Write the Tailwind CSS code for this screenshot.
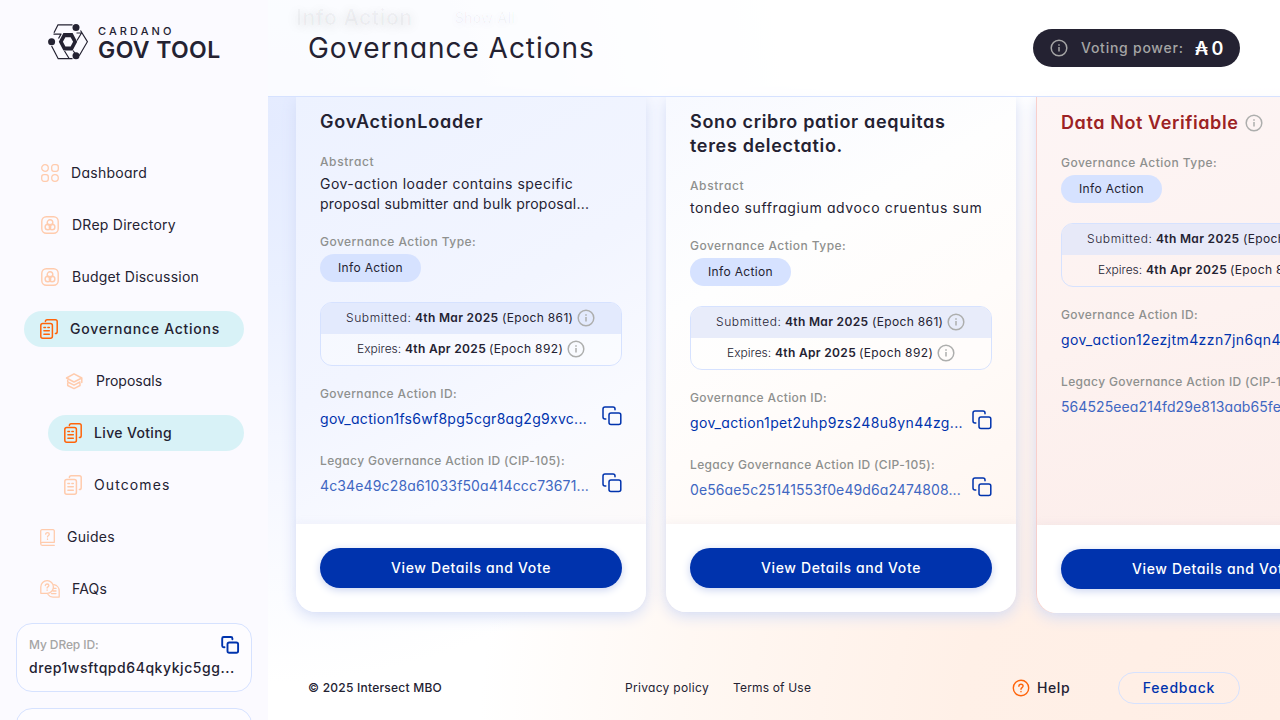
<!DOCTYPE html>
<html lang="en">
<head>
<meta charset="utf-8">
<title>Governance Actions</title>
<script src="https://cdn.jsdelivr.net/npm/@tailwindcss/browser@4"></script>
</head>
<body class="bg-white font-['Inter',sans-serif] text-[#242232] [font-feature-settings:'cv11']">
<svg class="hidden">
  <symbol id="info" viewBox="0 0 18 18"><g fill="none" stroke="currentColor" stroke-width="1.5"><circle cx="9" cy="9" r="7.8"/><path d="M9 8v4.6M9 5.2v1.5"/></g></symbol>
  <symbol id="copy" viewBox="0 0 20 20"><g fill="none" stroke="currentColor" stroke-width="1.5" stroke-linejoin="round" stroke-linecap="round"><rect x="7" y="7" width="11.8" height="11.6" rx="2"/><path d="M3.8 13H3a2 2 0 0 1-2-2V3a2 2 0 0 1 2-2h8a2 2 0 0 1 2 2v.8"/></g></symbol>
  <symbol id="doc" viewBox="0 0 18 20"><g fill="none" stroke="currentColor" stroke-width="1.5" stroke-linecap="round" stroke-linejoin="round"><rect x=".8" y="4.6" width="11.6" height="14.6" rx="2"/><path d="M5.4 2.6c0-1 .7-1.8 1.7-1.8h8.3c1 0 1.8.8 1.8 1.8v10.2c0 1-.8 1.8-1.8 1.800M3.9 8.400h1.600M7.900 8.400h1.400M3.900 11.800h5.400M3.900 15.200h5.400"/></g></symbol>
  <symbol id="rings" viewBox="0 0 18 18"><g fill="none" stroke="currentColor" stroke-width="1.4"><rect x=".8" y=".8" width="16.4" height="16.4" rx="4.5"/><circle cx="9" cy="6.6" r="2.8"/><circle cx="6.9" cy="11" r="2.8"/><circle cx="11.1" cy="11" r="2.8"/></g></symbol>
</svg>
<div class="flex h-[720px] w-[1280px] overflow-hidden">

  <!-- Sidebar -->
  <aside class="flex w-[268px] shrink-0 flex-col bg-[#fbfaff]">
    <div class="flex h-[155px] shrink-0 items-start gap-[10px] pt-[23px] pl-12">
      <svg class="mt-px h-[36px] w-[40px]" viewBox="0 0 40 36" fill="none" stroke="#242232" stroke-width="1.2">
        <path d="M6 8.800 10 .8h14.500M32.500 6.500l6.900 11.200-8.200 14M24.500 34.700H10.200L3.600 22M5.500 10.100h8M13 10.100 10.500 14.500M33.500 9l-4.500 7.500M28.500 9h5M16.500 27l4.800 7.700M25 26.500l2.500 3.500"/>
        <path fill="#242232" stroke="none" fill-rule="evenodd" d="M15.400 9h9.200l4.600 8.800-4.600 8.800h-9.200l-4.600-8.800ZM17.400 13.200l-2.500 4.600 2.500 4.600h5.200l2.500-4.600-2.500-4.600Z"/>
        <g fill="#242232" stroke="none"><circle cx="28" cy="3.6" r="3.5"/><circle cx="3.6" cy="17.800" r="3.5"/><circle cx="28" cy="31.800" r="3.5"/></g>
      </svg>
      <div class="flex flex-col whitespace-nowrap">
        <span class="mt-[2px] text-[11px] leading-[13px] font-medium tracking-[3.1px]">CARDANO</span>
        <span class="text-[23px] leading-6 font-semibold tracking-[.4px]">GOV TOOL</span>
      </div>
    </div>
    <nav class="flex shrink-0 flex-col gap-4 px-6 text-sm whitespace-nowrap">
      <a class="flex h-9 items-center gap-3 pl-[17px] tracking-[.28px]">
        <svg class="h-[18px] w-[18px] text-[#ffcbad]" viewBox="0 0 18 18" fill="none" stroke="currentColor" stroke-width="1.3"><circle cx="4" cy="4" r="3.3"/><rect x="10.7" y=".7" width="6.6" height="6.6" rx="2.2"/><rect x=".7" y="10.7" width="6.6" height="6.6" rx="2.2"/><circle cx="14" cy="14" r="3.3"/></svg>Dashboard</a>
      <a class="flex h-9 items-center gap-[13px] pl-[17px] tracking-[.25px]"><svg class="h-[18px] w-[18px] text-[#ffcbad]"><use href="#rings"/></svg>DRep Directory</a>
      <a class="flex h-9 items-center gap-[13px] pl-[17px] tracking-[.22px]"><svg class="h-[18px] w-[18px] text-[#ffcbad]"><use href="#rings"/></svg>Budget Discussion</a>
      <a class="flex h-9 items-center gap-3 rounded-full bg-[#d8f2f7] pl-4 font-medium tracking-[.76px]"><svg class="h-5 w-[18px] text-[#ff640a]"><use href="#doc"/></svg>Governance Actions</a>
      <a class="flex h-9 items-center gap-3 pl-[41px]">
        <svg class="h-[18px] w-[19px] text-[#ffcbad]" viewBox="0 0 19 18" fill="none" stroke="currentColor" stroke-width="1.5" stroke-linejoin="round" stroke-linecap="round"><path d="M1.5 6 9 1.8 16.800 6 9 10ZM16.800 6v4.500M2.700 8.200v1.800L9 13.200l6-3.200M2.700 11.500v2L9 16.600l6-3.100v-2"/></svg>Proposals</a>
      <a class="ml-6 flex h-9 items-center gap-3 rounded-full bg-[#d8f2f7] pl-4 font-medium tracking-[.35px]"><svg class="h-5 w-[18px] text-[#ff640a]"><use href="#doc"/></svg>Live Voting</a>
      <a class="flex h-9 items-center gap-3 pl-10 tracking-[1.1px]"><svg class="h-5 w-[18px] text-[#ffcbad]"><use href="#doc"/></svg>Outcomes</a>
      <a class="flex h-9 items-center gap-3 pl-4 tracking-[.29px]">
        <svg class="h-[17px] w-[15px] text-[#ffcbad]" viewBox="0 0 15 17" fill="none" stroke="currentColor" stroke-width="1.3" stroke-linecap="round"><path d="M14.300 13.300V2c0-.7-.5-1.300-1.300-1.300H2C1.200.7.700 1.300.700 2v12.800M14.300 13.300H2.200a1.500 1.500 0 0 0 0 3h12.100M5.700 5.200c0-1 .8-1.600 1.800-1.600s1.800.7 1.800 1.600c0 1.300-1.800 1.300-1.800 2.700M7.500 9.900v.5"/></svg>Guides</a>
      <a class="flex h-9 items-center gap-3 pl-4 tracking-[.18px]">
        <svg class="h-[18px] w-5 text-[#ffcbad]" viewBox="0 0 20 18" fill="none" stroke="currentColor" stroke-width="1.3" stroke-linecap="round" stroke-linejoin="round"><path d="M.8 13.300h6.300a6.300 6.300 0 1 0-6.300-6.300ZM.8 13.300V7M5.300 5.600c0-1 .8-1.600 1.800-1.600s1.800.7 1.800 1.600c0 1.300-1.800 1.300-1.800 2.500M7.100 9.900v.4M14 4.700a6.200 6.200 0 0 1 5.200 6.200v6.200H13a6 6 0 0 1-5-2.600M14 8.400h2M13.200 11h2.800M11.500 13.600H16"/></svg>FAQs</a>
    </nav>
    <div class="mx-4 mt-4 flex h-[69px] shrink-0 flex-col rounded-2xl border border-[#d6e2ff] bg-[#fdfcff] px-3 pt-[11px] whitespace-nowrap">
      <div class="flex h-5 items-center justify-between text-xs font-medium tracking-[-.1px] text-[#a5a5a5]"><span>My DRep ID:</span>
        <svg class="-mr-px h-5 w-5 text-[#0033ad]" viewBox="0 0 20 20" fill="none" stroke="currentColor" stroke-width="1.9" stroke-linejoin="round" stroke-linecap="round"><rect x="7.500" y="7.500" width="10.600" height="10.200" rx="1.800"/><path d="M4.500 12.200h-.8a1.500 1.500 0 0 1-1.500-1.500V3.500A1.500 1.500 0 0 1 3.700 2h7.200a1.500 1.500 0 0 1 1.500 1.500v.8"/></svg></div>
      <span class="mt-[3px] text-sm leading-5 font-medium tracking-[.56px]">drep1wsftqpd64qkykjc5gg...</span>
    </div>
    <div class="mx-4 mt-4 h-[69px] shrink-0 rounded-2xl border border-[#d6e2ff] bg-[#fdfcff]"></div>
  </aside>

  <!-- Main column -->
  <main class="flex w-[1012px] shrink-0 flex-col overflow-hidden bg-[radial-gradient(ellipse_560px_560px_at_0%_17%,#e4ebff_0%,#eaf0ff_30%,#f6f8ff_65%,#ffffff00_100%),radial-gradient(ellipse_800px_660px_at_100%_100%,#ffeee5_0%,#fff0e7_40%,#fff8f3_75%,#ffffff00_100%)]">
    <header class="relative z-10 flex h-[97px] shrink-0 items-center justify-between border-b border-[#d6e2ff] bg-white/80 pr-10 pl-10">
      <div class="absolute top-[6px] left-[28px] flex h-6 items-center gap-[42px] whitespace-nowrap text-black/3">
        <span class="text-[21px] font-semibold tracking-[.6px] [text-shadow:0_2px_12px_#0000001f]">Info Action</span>
        <span class="text-sm font-medium tracking-[.3px] [text-shadow:0_2px_9px_#0033ad0f]">Show All</span>
      </div>
      <h1 class="relative text-[28px] leading-8 tracking-[.96px] whitespace-nowrap">Governance Actions</h1>
      <div class="flex h-[38px] w-[207px] items-center rounded-full bg-[#242232] pl-[17px] whitespace-nowrap">
        <svg class="h-[18px] w-[18px] text-[#a5a5a5]"><use href="#info"/></svg>
        <span class="ml-[13px] w-[114px] text-sm font-medium tracking-[.75px] text-[#a5a5a5]">Voting power:</span>
        <span class="text-[18px] font-semibold tracking-[-.6px] text-white">₳ 0</span>
      </div>
    </header>

    <div class="flex w-[1200px] shrink-0 items-start gap-5 pl-7">
      <!-- Card 1 -->
      <article class="flex w-[350px] shrink-0 flex-col rounded-b-[20px] shadow-[0_4px_15px_#d3dcf6]">
        <div class="h-[427px] bg-[linear-gradient(150deg,#edf2ff_0%,#f2f5ff_50%,#f9faff_78%,#fdfafa_100%)] px-6 pt-[13px] whitespace-nowrap">
          <h2 class="text-[18px] leading-6 font-semibold tracking-[.82px]">GovActionLoader</h2>
          <p class="mt-5 text-xs font-medium tracking-[.6px] text-[#8e908e]">Abstract</p>
          <p class="mt-1 text-sm leading-5"><span class="tracking-[.48px]">Gov-action loader contains specific</span><br><span class="tracking-[.24px]">proposal submitter and bulk proposal...</span></p>
          <p class="mt-5 text-xs font-medium tracking-[.45px] text-[#8e908e]">Governance Action Type:</p>
          <div class="mt-1 flex h-7 w-[101px] items-center justify-center rounded-full bg-[#d6e2ff] text-xs tracking-[.34px]">Info Action</div>
          <div class="mt-5 flex h-16 flex-col overflow-hidden rounded-xl border border-[#d6e2ff] text-xs">
            <div class="flex h-[31px] items-center bg-[#e3eafd] pb-px pl-[25px]"><span class="w-[69px] font-light tracking-[.6px]">Submitted:</span><span class="w-[87px] font-semibold tracking-[.33px]">4th Mar 2025</span><span class="w-[75px] tracking-[.34px]">(Epoch 861)</span><svg class="h-[18px] w-[18px] text-[#adaead]"><use href="#info"/></svg></div>
            <div class="flex h-[31px] items-center bg-white/40 pb-px pl-[36px]"><span class="w-[48px] font-light">Expires:</span><span class="w-[84px] font-semibold tracking-[.33px]">4th Apr 2025</span><span class="w-[78px] tracking-[.38px]">(Epoch 892)</span><svg class="h-[18px] w-[18px] text-[#adaead]"><use href="#info"/></svg></div>
          </div>
          <p class="mt-5 text-xs font-medium tracking-[.37px] text-[#8e908e]">Governance Action ID:</p>
          <div class="mt-1 flex items-start justify-between text-[#0033ad]"><span class="mt-[3px] text-sm leading-5 tracking-[.29px]">gov_action1fs6wf8pg5cgr8ag2g9xvc...</span><svg class="h-5 w-5"><use href="#copy"/></svg></div>
          <p class="mt-6 text-xs font-medium tracking-[.35px] text-[#8e908e]">Legacy Governance Action ID (CIP-105):</p>
          <div class="mt-1 flex items-start justify-between text-[#0033ad]"><span class="mt-[3px] text-sm leading-5 tracking-[.14px] text-[#4067c2]">4c34e49c28a61033f50a414ccc73671...</span><svg class="h-5 w-5"><use href="#copy"/></svg></div>
        </div>
        <div class="rounded-b-[20px] bg-white p-6 shadow-[0_-3px_6px_#d6dcf030]"><button class="block h-10 w-full rounded-full bg-[#0033ad] text-sm font-medium tracking-[.64px] text-white shadow-[0_2px_8px_#c9d3f0]">View Details and Vote</button></div>
      </article>

      <!-- Card 2 -->
      <article class="flex w-[350px] shrink-0 flex-col rounded-b-[20px] shadow-[0_4px_15px_#d3dcf6]">
        <div class="h-[427px] bg-[linear-gradient(150deg,#f7f9ff_0%,#fefefe_35%,#fffcfa_60%,#fff6f1_100%)] px-6 pt-[13px] whitespace-nowrap">
          <h2 class="text-[18px] leading-6 font-semibold tracking-[.67px]">Sono cribro patior aequitas<br>teres delectatio.</h2>
          <p class="mt-5 text-xs font-medium tracking-[.6px] text-[#8e908e]">Abstract</p>
          <p class="mt-1 text-sm leading-5 tracking-[.62px]">tondeo suffragium advoco cruentus sum</p>
          <p class="mt-5 text-xs font-medium tracking-[.45px] text-[#8e908e]">Governance Action Type:</p>
          <div class="mt-1 flex h-7 w-[101px] items-center justify-center rounded-full bg-[#d6e2ff] text-xs tracking-[.34px]">Info Action</div>
          <div class="mt-5 flex h-16 flex-col overflow-hidden rounded-xl border border-[#d6e2ff] text-xs">
            <div class="flex h-[31px] items-center bg-[#e8ecfa] pb-px pl-[25px]"><span class="w-[69px] font-light tracking-[.6px]">Submitted:</span><span class="w-[87px] font-semibold tracking-[.33px]">4th Mar 2025</span><span class="w-[75px] tracking-[.34px]">(Epoch 861)</span><svg class="h-[18px] w-[18px] text-[#adaead]"><use href="#info"/></svg></div>
            <div class="flex h-[31px] items-center bg-white/40 pb-px pl-[36px]"><span class="w-[48px] font-light">Expires:</span><span class="w-[84px] font-semibold tracking-[.33px]">4th Apr 2025</span><span class="w-[78px] tracking-[.38px]">(Epoch 892)</span><svg class="h-[18px] w-[18px] text-[#adaead]"><use href="#info"/></svg></div>
          </div>
          <p class="mt-5 text-xs font-medium tracking-[.37px] text-[#8e908e]">Governance Action ID:</p>
          <div class="mt-1 flex items-start justify-between text-[#0033ad]"><span class="mt-[3px] text-sm leading-5 tracking-[.36px]">gov_action1pet2uhp9zs248u8yn44zg...</span><svg class="h-5 w-5"><use href="#copy"/></svg></div>
          <p class="mt-6 text-xs font-medium tracking-[.35px] text-[#8e908e]">Legacy Governance Action ID (CIP-105):</p>
          <div class="mt-1 flex items-start justify-between text-[#0033ad]"><span class="mt-[3px] text-sm leading-5 tracking-[.1px] text-[#4067c2]">0e56ae5c25141553f0e49d6a2474808...</span><svg class="h-5 w-5"><use href="#copy"/></svg></div>
        </div>
        <div class="rounded-b-[20px] bg-white p-6 shadow-[0_-3px_6px_#e0d9e030]"><button class="block h-10 w-full rounded-full bg-[#0033ad] text-sm font-medium tracking-[.64px] text-white shadow-[0_2px_8px_#c9d3f0]">View Details and Vote</button></div>
      </article>

      <!-- Card 3, metadata could not be verified -->
      <article class="flex w-[352px] shrink-0 flex-col rounded-b-[20px] border-x border-[#f8cfcb] shadow-[0_4px_15px_#d3dcf6]">
        <div class="h-[428px] bg-[linear-gradient(165deg,#fdf5f5_0%,#fdf2f0_50%,#fcedea_100%)] px-6 pt-[14px] whitespace-nowrap">
          <h2 class="flex items-center gap-[7px] text-[18px] leading-6 font-semibold tracking-[.6px] text-[#9c2224]">Data Not Verifiable<svg class="h-[18px] w-[18px] text-[#adaead]"><use href="#info"/></svg></h2>
          <p class="mt-5 text-xs font-medium tracking-[.45px] text-[#8e908e]">Governance Action Type:</p>
          <div class="mt-1 flex h-7 w-[101px] items-center justify-center rounded-full bg-[#d6e2ff] text-xs tracking-[.34px]">Info Action</div>
          <div class="mt-5 flex h-16 flex-col overflow-hidden rounded-xl border border-[#d6e2ff] text-xs">
            <div class="flex h-[31px] items-center bg-[#e7e9f8] pb-px pl-[25px]"><span class="w-[69px] font-light tracking-[.6px]">Submitted:</span><span class="w-[87px] font-semibold tracking-[.33px]">4th Mar 2025</span><span class="w-[75px] tracking-[.34px]">(Epoch 861)</span></div>
            <div class="flex h-[31px] items-center pb-px pl-[36px]"><span class="w-[48px] font-light">Expires:</span><span class="w-[84px] font-semibold tracking-[.33px]">4th Apr 2025</span><span class="w-[78px] tracking-[.38px]">(Epoch 892)</span></div>
          </div>
          <p class="mt-5 text-xs font-medium tracking-[.37px] text-[#8e908e]">Governance Action ID:</p>
          <p class="mt-[7px] text-sm leading-5 tracking-[.44px] text-[#0033ad]">gov_action12ezjtm4zzn7jn6qn4</p>
          <p class="mt-6 text-xs font-medium tracking-[.35px] text-[#8e908e]">Legacy Governance Action ID (CIP-105):</p>
          <p class="mt-[7px] text-sm leading-5 tracking-[.09px] text-[#4067c2]">564525eea214fd29e813aab65fe</p>
        </div>
        <div class="rounded-b-[20px] bg-white p-6 shadow-[0_-3px_6px_#e0d0d830]"><button class="block h-10 w-full rounded-full bg-[#0033ad] text-sm font-medium tracking-[.64px] text-white shadow-[0_2px_8px_#c9d3f0]">View Details and Vote</button></div>
      </article>
    </div>

    <footer class="mt-[59px] flex h-8 shrink-0 items-center px-10 text-xs whitespace-nowrap">
      <span class="w-[317px] font-medium tracking-[.24px]">© 2025 Intersect MBO</span>
      <span class="w-[108px] tracking-[.31px]">Privacy policy</span>
      <span class="tracking-[.17px]">Terms of Use</span>
      <div class="ml-auto flex items-center text-sm font-medium">
        <svg class="h-[18px] w-[18px] text-[#ff640a]" viewBox="0 0 18 18" fill="none" stroke="currentColor" stroke-width="1.400" stroke-linecap="round"><circle cx="9" cy="9" r="7.700"/><path d="M6.900 7.200c0-1.200.9-2 2.100-2s2.100.8 2.100 1.900C11.100 8.600 9 8.700 9 10.200M9 12.400v.3"/></svg>
        <span class="ml-[7px] w-[81px] tracking-[.6px]">Help</span>
        <span class="flex h-8 w-[122px] items-center justify-center rounded-full border border-[#d6e2ff] tracking-[.78px] text-[#0033ad]">Feedback</span>
      </div>
    </footer>
  </main>
</div>
</body>
</html>
